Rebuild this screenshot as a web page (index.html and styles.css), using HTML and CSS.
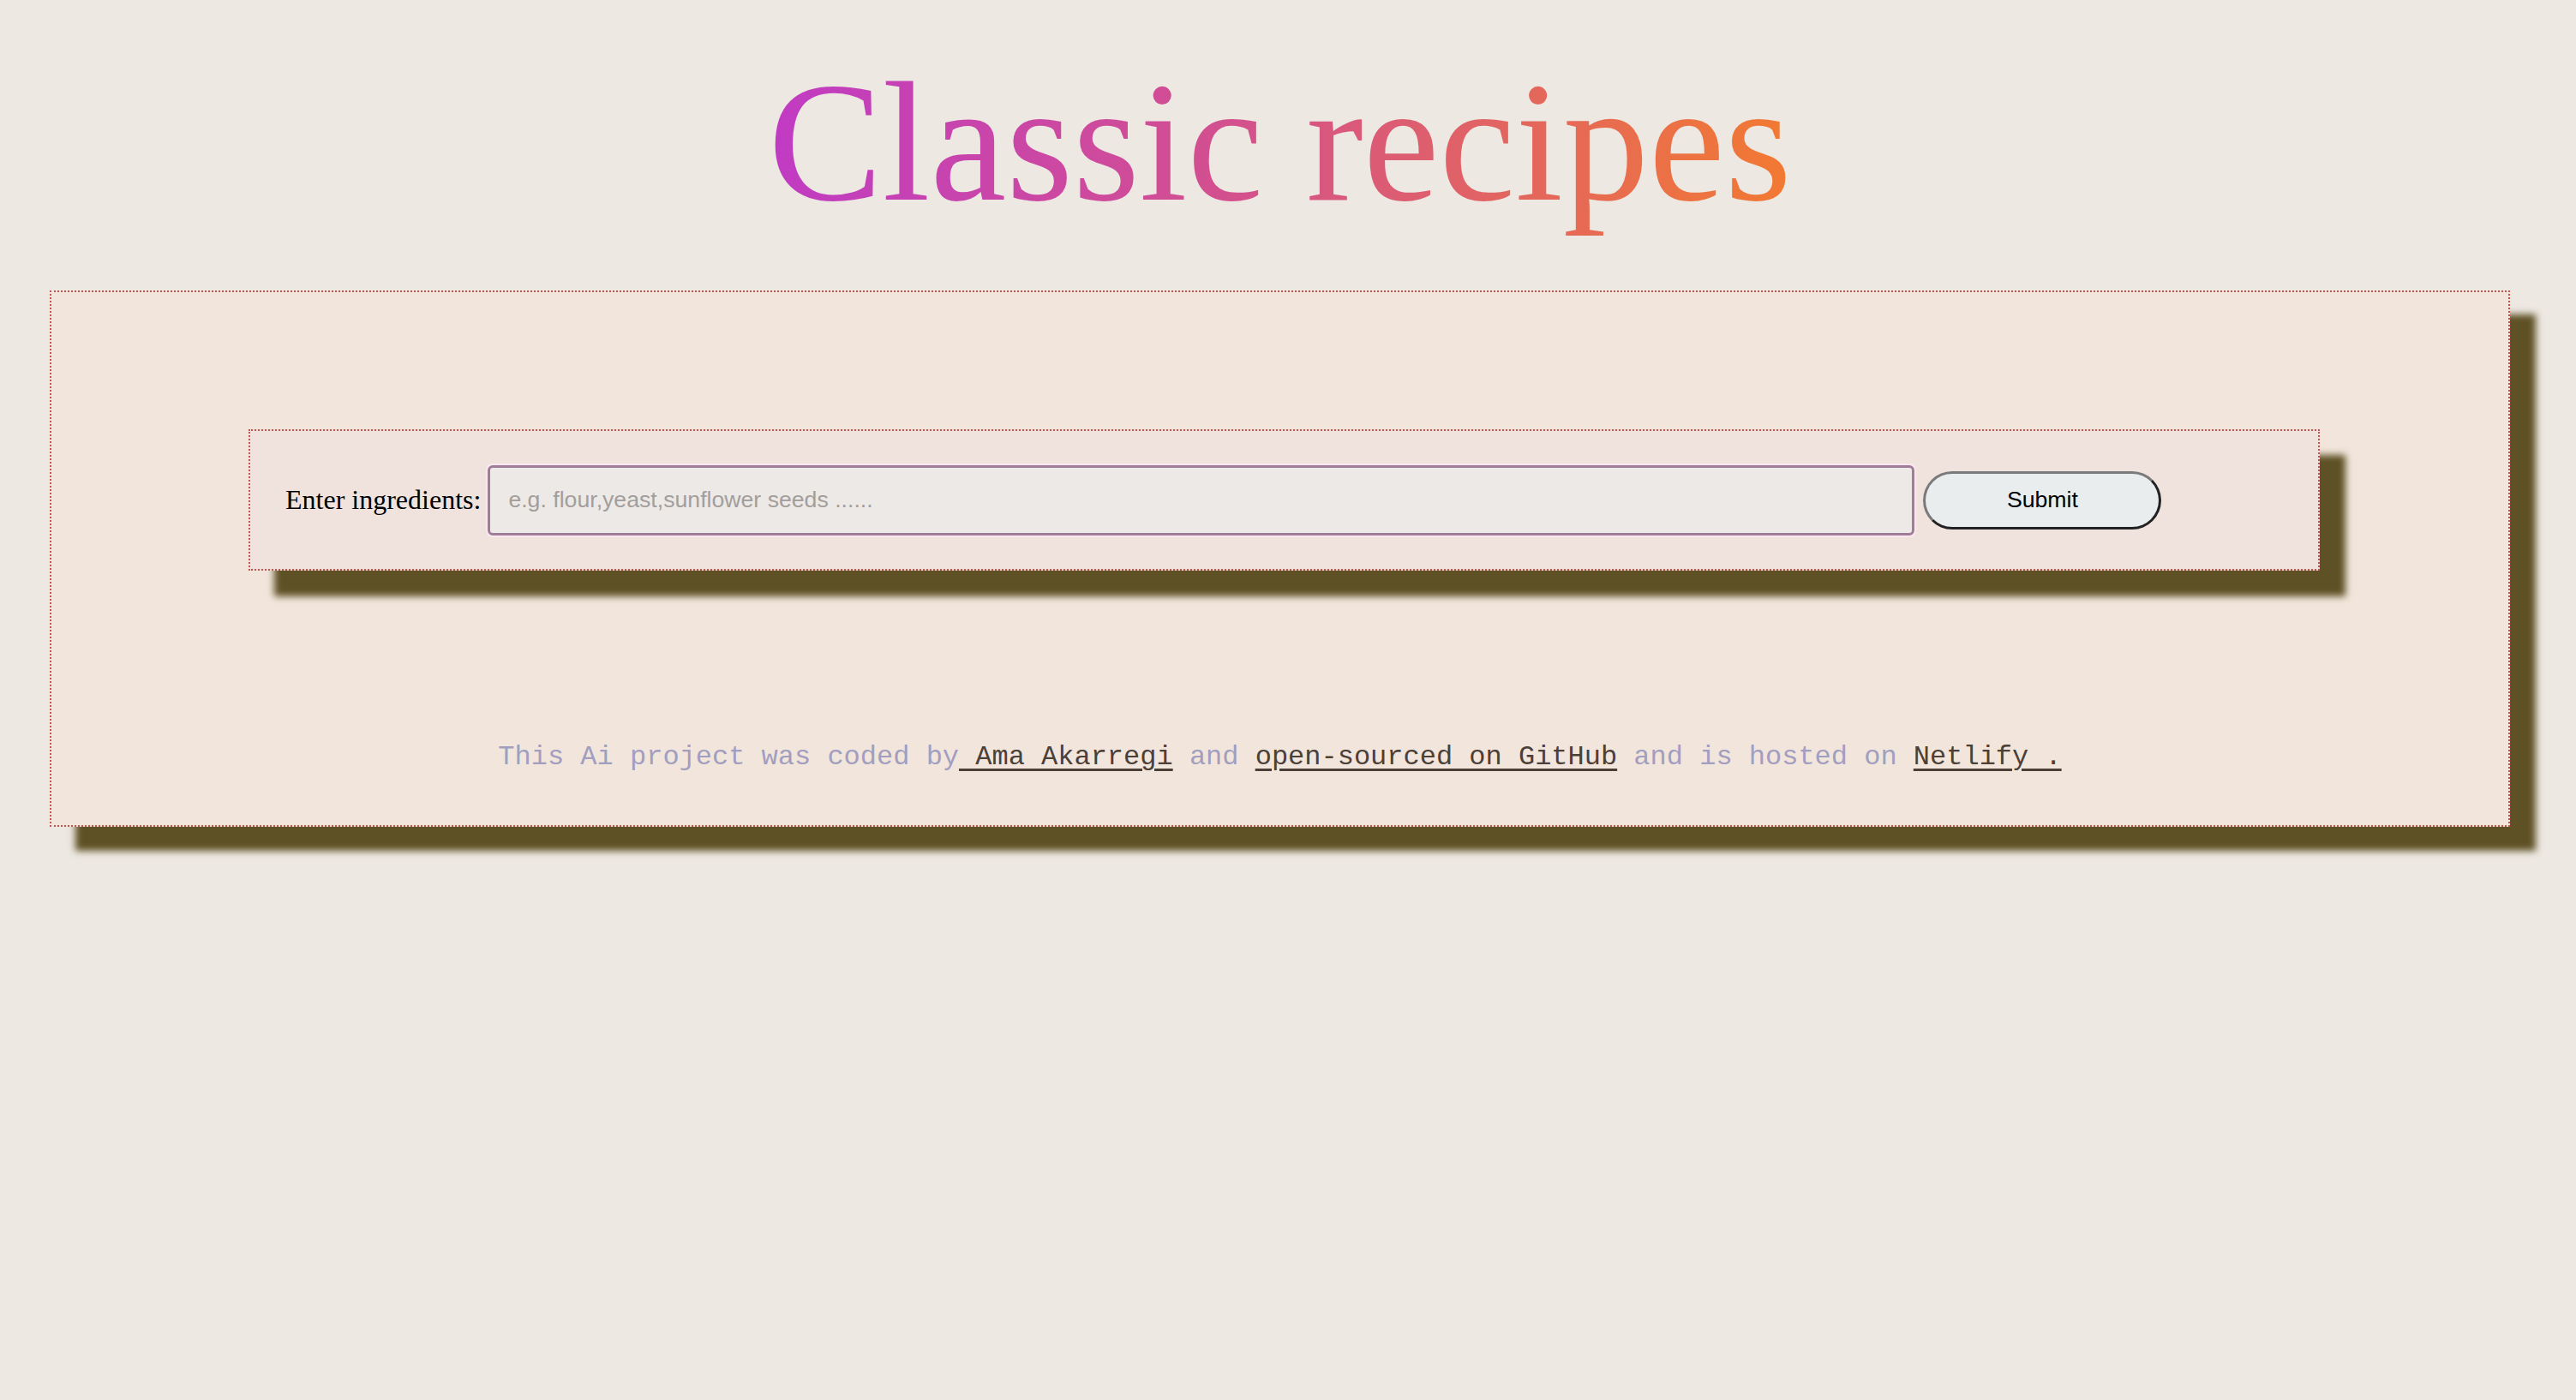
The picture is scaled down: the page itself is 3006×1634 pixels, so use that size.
FILE: index.html
```html
<!DOCTYPE html>
<html lang="en">
<head>
<meta charset="utf-8">
<title>Classic recipes</title>
<link rel="stylesheet" href="styles.css">
</head>
<body>
<div class="page">
  <h1 class="title"><span class="title-text">Classic recipes</span></h1>
  <div class="card">
    <form class="search">
      <label class="search-label" for="ingredients">Enter ingredients:</label>
      <input class="search-input" id="ingredients" type="text" placeholder="e.g. flour,yeast,sunflower seeds ......">
      <button class="search-button" type="button">Submit</button>
    </form>
    <footer class="credits">This Ai project was coded by<a href="#"> Ama Akarregi</a> and <a href="#">open-sourced on GitHub</a> and is hosted on <a href="#">Netlify .</a></footer>
  </div>
</div>
</body>
</html>
```
FILE: styles.css
```css
html, body {
  margin: 0;
  padding: 0;
}
body {
  background: #ede8e2;
}
.page {
  margin-left: 58px;
  width: 2871px;
  padding-top: 51px;
  padding-bottom: 120px;
}
.title {
  margin: 0 0 58px 0;
  text-align: center;
  font-family: "Liberation Serif", "Times New Roman", serif;
  font-weight: normal;
  font-size: 200px;
  line-height: 230px;
}
.title-text {
  background: linear-gradient(90deg, #c03bc3 0%, #d3508e 45%, #f27a31 100%);
  -webkit-background-clip: text;
  background-clip: text;
  color: transparent;
}
.card {
  box-sizing: border-box;
  height: 626px;
  border: 2px dotted #c4554c;
  background: #f2e6dc;
  box-shadow: 30px 28px 8px #5e5125;
  padding-top: 160px;
}
.search {
  box-sizing: border-box;
  margin: 0 0 0 230px;
  width: 2417px;
  height: 165px;
  border: 2px dotted #c4554c;
  background: #f0e2dc;
  box-shadow: 30px 30px 8px #5e5125;
  display: flex;
  align-items: center;
  padding-left: 41px;
}
.search-label {
  font-family: "Liberation Serif", "Times New Roman", serif;
  font-size: 32px;
  color: #000;
  margin-right: 8px;
}
.search-input {
  box-sizing: border-box;
  width: 1665px;
  height: 82px;
  border: 3px solid #a07c98;
  border-radius: 6px;
  box-shadow: 0 0 0 2px #fae8f1;
  background: #ede9e6;
  padding: 0 0 0 21px;
  font-family: "Liberation Sans", Arial, sans-serif;
  font-size: 26.67px;
  color: #333;
  outline: none;
}
.search-input::placeholder {
  color: #a39e9b;
}
.search-button {
  box-sizing: border-box;
  margin-left: 10px;
  width: 278px;
  height: 68px;
  border-style: solid;
  border-width: 3px;
  border-color: #7a7a7a #222 #222 #7a7a7a;
  border-radius: 34px;
  background: #e9edee;
  font-family: "Liberation Sans", Arial, sans-serif;
  font-size: 26.67px;
  color: #000;
  padding: 0;
}
.credits {
  margin-top: 200px;
  text-align: center;
  font-family: "Liberation Mono", "Courier New", monospace;
  font-size: 32px;
  line-height: 36px;
  color: #a29ec0;
  white-space: pre;
}
.credits a {
  color: #4b4038;
  text-decoration: underline;
  text-decoration-thickness: 3px;
  text-underline-offset: 5px;
}
```
